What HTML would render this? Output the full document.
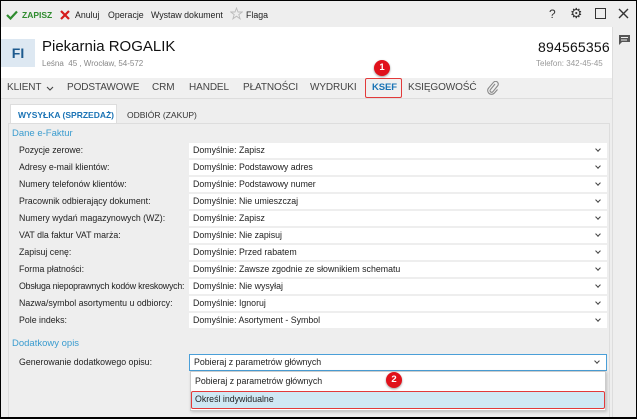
<!DOCTYPE html>
<html><head><meta charset="utf-8"><style>
*{box-sizing:border-box;margin:0;padding:0}
body{width:637px;height:419px;overflow:hidden;font-family:"Liberation Sans",sans-serif;font-size:10px;color:#222;background:#000;position:relative}
.a{position:absolute;white-space:nowrap}
#f{position:absolute;left:1px;top:1px;width:635px;height:416px;background:#eeeeee;overflow:hidden}
.sel{position:absolute;left:188px;width:418px;height:15px;background:#fff;padding-left:4px;line-height:15px;font-size:8.8px}
.sel:after{content:"";position:absolute;right:7px;top:4px;width:3px;height:3px;border-right:1.3px solid #444;border-bottom:1.3px solid #444;transform:rotate(45deg)}
.lab{position:absolute;left:18px;font-size:8.8px;line-height:15px}
.tab{position:absolute;top:81px;font-size:10px;color:#444;letter-spacing:-.1px}
.badge{position:absolute;width:16px;height:16px;border-radius:50%;background:#e0111b;color:#fff;font-weight:bold;font-size:9.5px;text-align:center;line-height:16px;box-shadow:0 1px 2px #0006}
.tb{font-size:8.8px;top:9px}
</style></head><body><div id="f">
<div class="a" style="left:0;top:0;width:635px;height:26px;background:#eeeeee"></div>
<svg class="a" style="left:5px;top:9px" width="12" height="10"><path d="M1 5 L4.5 8.5 L11 1.5" stroke="#2e8b2e" stroke-width="2.2" fill="none"/></svg>
<div class="a tb" style="left:21px;color:#2e8b2e;font-weight:bold;font-size:8.5px">ZAPISZ</div>
<svg class="a" style="left:59px;top:9px" width="10" height="10"><path d="M1 1L9 9M9 1L1 9" stroke="#d51c1c" stroke-width="2.2"/></svg>
<div class="a tb" style="left:74px">Anuluj</div>
<div class="a tb" style="left:107px">Operacje</div>
<div class="a tb" style="left:150px">Wystaw dokument</div>
<svg class="a" style="left:229px;top:6px" width="13" height="13"><path d="M6.5 1L8 5H12.3L8.8 7.6L10.1 11.8L6.5 9.2L2.9 11.8L4.2 7.6L0.7 5H5Z" fill="none" stroke="#bbb" stroke-width=".9"/></svg>
<div class="a tb" style="left:245px">Flaga</div>
<div class="a" style="left:548px;top:6px;font-size:12px;color:#333">?</div>
<div class="a" style="left:569px;top:4px;font-size:14px;color:#333">⚙</div>
<div class="a" style="left:594px;top:7px;width:11px;height:11px;border:1.5px solid #333"></div>
<svg class="a" style="left:617px;top:7px" width="11" height="11"><path d="M1 1L10 10M10 1L1 10" stroke="#333" stroke-width="1.4"/></svg>
<div class="a" style="left:611px;top:26px;width:24px;height:392px;background:#eeeeee;border-left:1px solid #ddd"></div>
<svg class="a" style="left:617px;top:33px" width="13" height="12"><path d="M1 1H12V8H4L1 11Z" fill="#555"/><path d="M3 3.5H10M3 6H9" stroke="#eee" stroke-width="1"/></svg>
<div class="a" style="left:0;top:26px;width:611px;height:51px;background:#fff"></div>
<div class="a" style="left:0;top:38px;width:34px;height:28px;background:#dde8f2;color:#1d5a8e;font-size:14px;font-weight:bold;text-align:center;line-height:28px">FI</div>
<div class="a" style="left:41px;top:37px;font-size:15px;color:#111">Piekarnia ROGALIK</div>
<div class="a" style="left:41px;top:58px;font-size:8px;color:#888">Leśna &nbsp;45 , Wrocław, 54-572</div>
<div class="a" style="left:537px;top:38px;font-size:14px;color:#111;letter-spacing:.2px">894565356</div>
<div class="a" style="left:535px;top:58px;font-size:8px;color:#999">Telefon: 342-45-45</div>
<div class="a" style="left:0;top:77px;width:611px;height:21px;background:#f0f0f0;border-bottom:1px solid #ddd"></div>
<div class="tab" style="left:6px">KLIENT</div>
<svg class="a" style="left:45px;top:85px" width="8" height="5"><path d="M1 1L4 4L7 1" stroke="#444" fill="none" stroke-width="1.1"/></svg>
<div class="tab" style="left:66px">PODSTAWOWE</div>
<div class="tab" style="left:151px">CRM</div>
<div class="tab" style="left:188px">HANDEL</div>
<div class="tab" style="left:242px">PŁATNOŚCI</div>
<div class="tab" style="left:309px">WYDRUKI</div>
<div class="a" style="left:364px;top:77px;width:37px;height:20px;border:1.5px solid #e23a3a;border-radius:2px"></div>
<div class="tab" style="left:371px;color:#1a73b5;font-weight:bold;font-size:9.5px">KSEF</div>
<div class="tab" style="left:407px">KSIĘGOWOŚĆ</div>
<svg class="a" style="left:486px;top:80px" width="12" height="14"><path d="M8 3L3.5 8.5a1.6 1.6 0 0 0 2.3 2.3L10.5 5a2.7 2.7 0 0 0-3.9-3.8L1.8 6.8a3.8 3.8 0 0 0 5.4 5.4L10.5 8.5" fill="none" stroke="#888" stroke-width="1.1"/></svg>
<div class="badge" style="left:373px;top:59px">1</div>
<div class="a" style="left:9px;top:103px;width:107px;height:20px;background:#fff;border:1px solid #ddd;border-bottom:none"></div>
<div class="a" style="left:17px;top:109px;font-size:8.5px;font-weight:bold;color:#1a73b5">WYSYŁKA (SPRZEDAŻ)</div>
<div class="a" style="left:126px;top:109px;font-size:8.5px;color:#333">ODBIÓR (ZAKUP)</div>
<div class="a" style="left:7px;top:122px;width:602px;height:296px;border:1px solid #ddd;border-bottom:none"></div>
<div class="a" style="left:11px;top:127px;font-size:9.5px;color:#3b9ccf">Dane e-Faktur</div>
<div class="lab" style="top:142px">Pozycje zerowe:</div><div class="sel" style="top:142px">Domyślnie: Zapisz</div>
<div class="lab" style="top:159px">Adresy e-mail klientów:</div><div class="sel" style="top:159px">Domyślnie: Podstawowy adres</div>
<div class="lab" style="top:176px">Numery telefonów klientów:</div><div class="sel" style="top:176px">Domyślnie: Podstawowy numer</div>
<div class="lab" style="top:193px">Pracownik odbierający dokument:</div><div class="sel" style="top:193px">Domyślnie: Nie umieszczaj</div>
<div class="lab" style="top:210px">Numery wydań magazynowych (WZ):</div><div class="sel" style="top:210px">Domyślnie: Zapisz</div>
<div class="lab" style="top:227px">VAT dla faktur VAT marża:</div><div class="sel" style="top:227px">Domyślnie: Nie zapisuj</div>
<div class="lab" style="top:244px">Zapisuj cenę:</div><div class="sel" style="top:244px">Domyślnie: Przed rabatem</div>
<div class="lab" style="top:261px">Forma płatności:</div><div class="sel" style="top:261px">Domyślnie: Zawsze zgodnie ze słownikiem schematu</div>
<div class="lab" style="top:278px;letter-spacing:-.2px">Obsługa niepoprawnych kodów kreskowych:</div><div class="sel" style="top:278px">Domyślnie: Nie wysyłaj</div>
<div class="lab" style="top:295px">Nazwa/symbol asortymentu u odbiorcy:</div><div class="sel" style="top:295px">Domyślnie: Ignoruj</div>
<div class="lab" style="top:312px">Pole indeks:</div><div class="sel" style="top:312px">Domyślnie: Asortyment - Symbol</div>
<div class="a" style="left:11px;top:337px;font-size:9.5px;color:#3b9ccf">Dodatkowy opis</div>
<div class="lab" style="top:354px">Generowanie dodatkowego opisu:</div>
<div class="sel" style="top:353px;height:17px;border:1px solid #4a9fd8;line-height:15px">Pobieraj z parametrów głównych</div>
<div class="a" style="left:189px;top:370px;width:416px;height:40px;background:#fff;border:1px solid #ccc;box-shadow:1px 1px 3px #0003"></div>
<div class="a" style="left:194px;top:375px;font-size:8.8px">Pobieraj z parametrów głównych</div>
<div class="a" style="left:190px;top:390px;width:414px;height:18px;background:#cfe8f4;border:1.5px solid #e23a3a;border-radius:2px"></div>
<div class="a" style="left:194px;top:393px;font-size:8.8px">Określ indywidualne</div>
<div class="badge" style="left:385px;top:371px">2</div>
</div></body></html>
